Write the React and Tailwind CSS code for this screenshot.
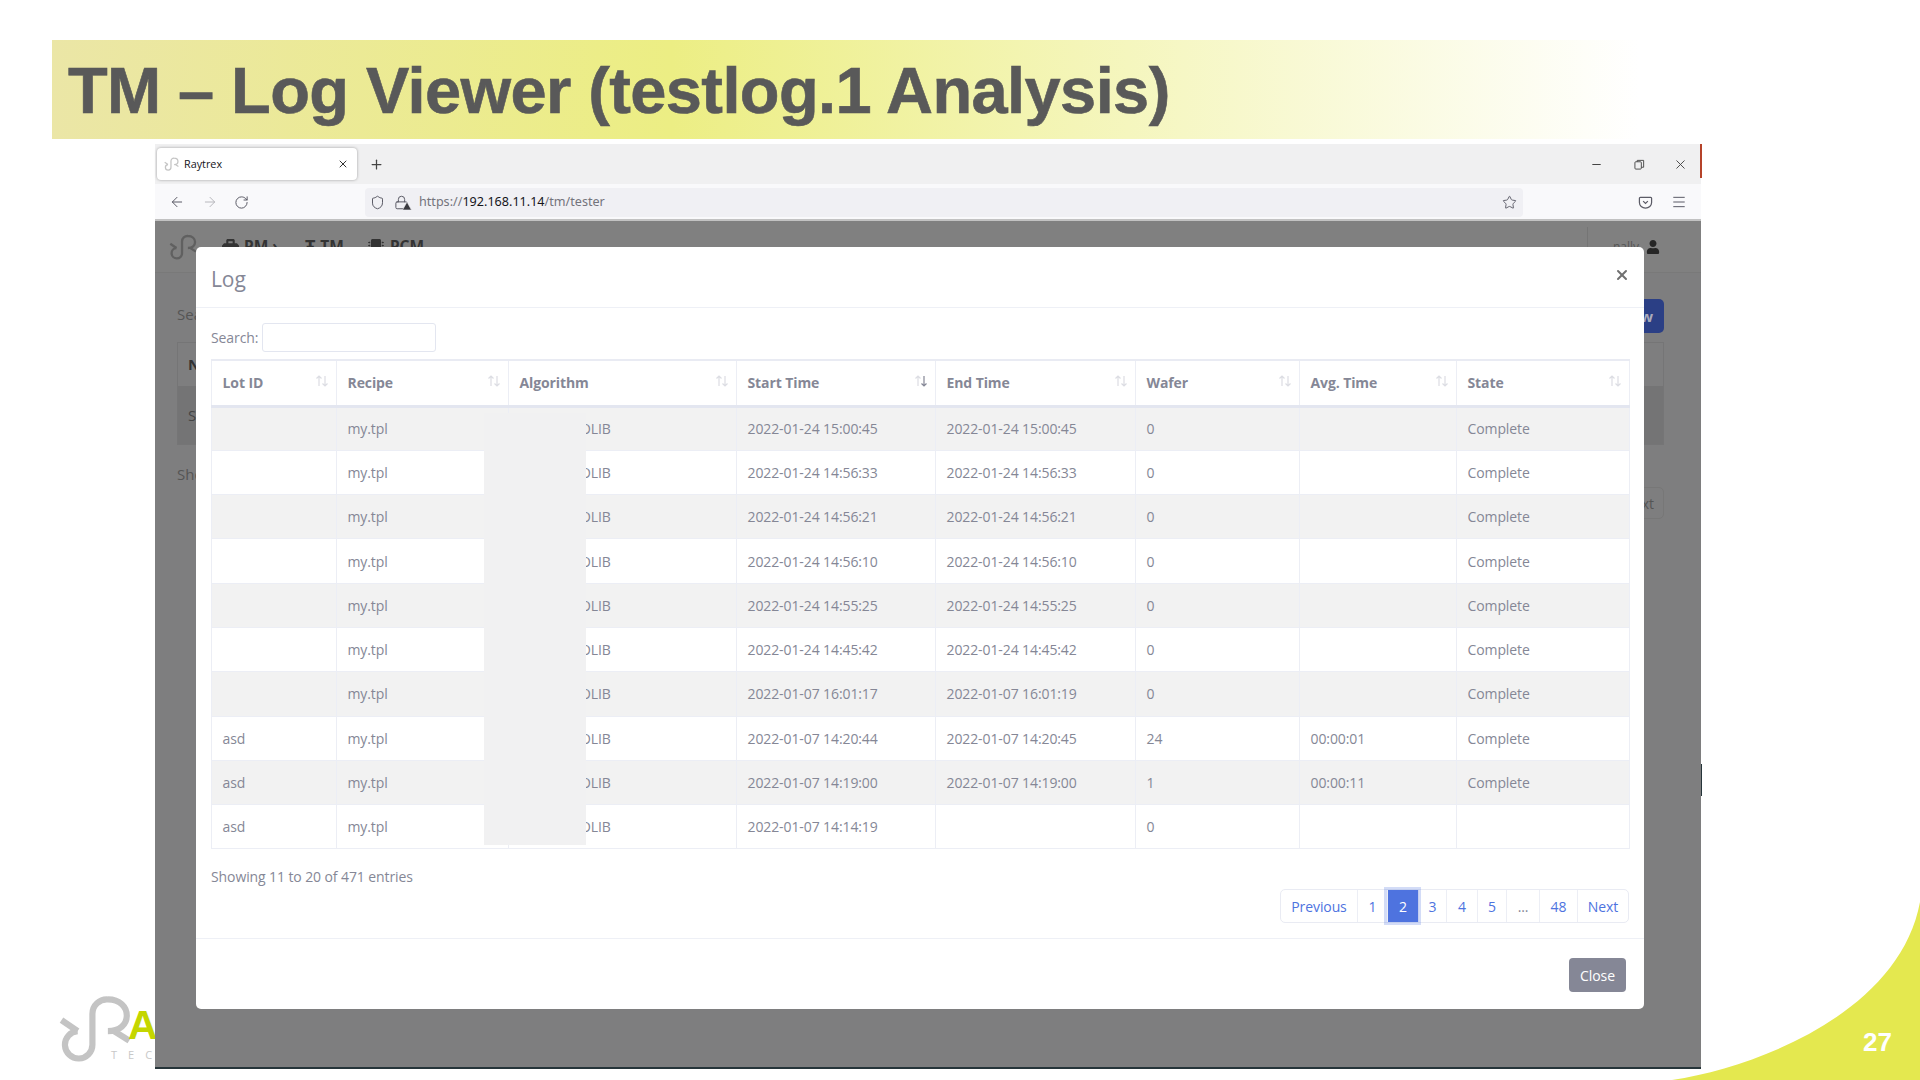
import React from 'react';
import { ArrowLeft, ArrowRight, RotateCw, Shield, Lock, Star, Minus, X, Plus, Menu } from 'lucide-react';
import { FaToolbox, FaMicrochip, FaUser } from 'react-icons/fa';

const rows = [
  ['', 'my.tpl', '2022-01-24 15:00:45', '2022-01-24 15:00:45', '0', '', 'Complete'],
  ['', 'my.tpl', '2022-01-24 14:56:33', '2022-01-24 14:56:33', '0', '', 'Complete'],
  ['', 'my.tpl', '2022-01-24 14:56:21', '2022-01-24 14:56:21', '0', '', 'Complete'],
  ['', 'my.tpl', '2022-01-24 14:56:10', '2022-01-24 14:56:10', '0', '', 'Complete'],
  ['', 'my.tpl', '2022-01-24 14:55:25', '2022-01-24 14:55:25', '0', '', 'Complete'],
  ['', 'my.tpl', '2022-01-24 14:45:42', '2022-01-24 14:45:42', '0', '', 'Complete'],
  ['', 'my.tpl', '2022-01-07 16:01:17', '2022-01-07 16:01:19', '0', '', 'Complete'],
  ['asd', 'my.tpl', '2022-01-07 14:20:44', '2022-01-07 14:20:45', '24', '00:00:01', 'Complete'],
  ['asd', 'my.tpl', '2022-01-07 14:19:00', '2022-01-07 14:19:00', '1', '00:00:11', 'Complete'],
  ['asd', 'my.tpl', '2022-01-07 14:14:19', '', '0', '', ''],
];

const columns = [
  { name: 'Lot ID', width: 'w-[125px]' },
  { name: 'Recipe', width: 'w-[172px]' },
  { name: 'Algorithm', width: 'w-[228px]' },
  { name: 'Start Time', width: 'w-[199px]', active: true },
  { name: 'End Time', width: 'w-[200px]' },
  { name: 'Wafer', width: 'w-[164px]' },
  { name: 'Avg. Time', width: 'w-[157px]' },
  { name: 'State', width: 'w-[173px]' },
];

const pages = [
  { label: 'Previous', width: 'w-[76px]' },
  { label: '1', width: 'w-[30px]' },
  { label: '2', width: 'w-[31px]', active: true },
  { label: '3', width: 'w-[28px]' },
  { label: '4', width: 'w-[31px]' },
  { label: '5', width: 'w-[29px]' },
  { label: '...', width: 'w-[33px]', muted: true },
  { label: '48', width: 'w-[38px]' },
  { label: 'Next', width: 'w-[51px]' },
];

const Logo = ({ className, color = '#c4c4c4' }) => (
  <svg viewBox="25 45 215 195" className={className} fill="none" stroke={color} strokeWidth="18">
    <path d="M35 118 L82 150" />
    <path d="M82 150 A40 40 0 1 0 125 190 L125 100 A42 42 0 0 1 170 58 C205 58 225 80 225 105 C225 130 205 150 170 150" />
    <path d="M188 150 L232 178" />
  </svg>
);

const SortArrows = ({ active }) => (
  <svg viewBox="0 0 14 14" className="w-[14px] h-[14px] shrink-0 mb-[3px]" fill="none" strokeWidth="1.2">
    <path d="M4 12 V2 M1.5 4.5 L4 2 L6.5 4.5" stroke="#dcdde3" />
    <path d="M10 2 V12 M7.5 9.5 L10 12 L12.5 9.5" stroke={active ? '#858796' : '#dcdde3'} />
  </svg>
);

const RestoreIcon = () => (
  <svg viewBox="0 0 12 12" className="w-[11px] h-[11px]" fill="none" stroke="#444" strokeWidth="1">
    <rect x="1" y="3" width="7" height="8" rx="1" />
    <path d="M3.5 3 V1.5 H10.5 V9 H8" />
  </svg>
);

const PocketIcon = () => (
  <svg viewBox="0 0 16 16" className="w-[15px] h-[15px]" fill="none" stroke="#5b5b66" strokeWidth="1.3">
    <path d="M2.5 2.5 H13.5 A1 1 0 0 1 14.5 3.5 V8 A6.5 6 0 0 1 1.5 8 V3.5 A1 1 0 0 1 2.5 2.5 Z" />
    <path d="M5.5 6.5 L8 9 L10.5 6.5" />
  </svg>
);

const LockWarning = () => (
  <span className="relative w-[16px] h-[16px] flex items-center">
    <Lock size={15} color="#5b5b66" strokeWidth={1.6} />
    <svg viewBox="0 0 10 10" className="absolute right-[-2px] bottom-[-1px] w-[10px] h-[10px]">
      <path d="M5 1 L9.5 9 H0.5 Z" fill="#3a3a3f" stroke="#f0f0f4" strokeWidth="0.6" />
    </svg>
  </span>
);

const App = () => {
  return (
    <div className="relative w-[1920px] h-[1080px] overflow-hidden bg-white font-['Open_Sans',sans-serif]">
      {/* slide decoration */}
      <svg viewBox="0 0 1920 1080" className="absolute inset-0 w-[1920px] h-[1080px]">
        <path d="M1672 1080 C1762 1066 1900 1010 1920 902 L1920 1080 Z" fill="#e4e84f" />
      </svg>
      <Logo className="absolute left-[58px] top-[995px] w-[74px] h-[67px]" />
      <span className="absolute left-[128px] top-[1004px] text-[41px] leading-[42px] font-bold text-[#c4d600] font-['Liberation_Sans',sans-serif]">
        A
      </span>
      <span className="absolute left-[111px] top-[1048px] text-[11px] leading-[14px] tracking-[11px] text-[#c8c8c8]">
        TEC
      </span>
      <span className="absolute left-[1863px] top-[1026px] text-[26px] leading-[32px] font-bold text-white font-['Liberation_Sans',sans-serif]">
        27
      </span>

      <div className="relative flex flex-col pt-[40px]">
        <div className="ml-[52px] w-[1588px] h-[99px] flex items-center pl-[16px] bg-[linear-gradient(90deg,#ebe6a6_0%,#ecee84_39%,#ffffff_100%)]">
          <h1 className="mt-[3px] text-[65px] leading-[96px] tracking-[-0.6px] font-bold text-[#595959] [-webkit-text-stroke:0.6px_#595959] font-['Liberation_Sans',sans-serif]">
            TM – Log Viewer (testlog.1 Analysis)
          </h1>
        </div>

        {/* browser window */}
        <div className="relative ml-[155px] mt-[5px] w-[1546px] h-[925px] flex flex-col">
          <div className="h-[40px] bg-[#f0f0f1] flex items-center pl-[2px] relative">
            <div className="w-[200px] h-[32px] bg-white rounded-[4px] shadow-[0_0_3px_rgba(0,0,0,0.35)] flex items-center pl-[7px] pr-[8px]">
              <Logo className="w-[15px] h-[14px]" />
              <span className="ml-[5px] text-[10.8px] text-[#15141a]">Raytrex</span>
              <X size={12} color="#333" className="ml-auto" />
            </div>
            <Plus size={15} color="#444" className="ml-[12px]" />
            <div className="ml-auto flex items-center">
              <Minus size={13} color="#444" />
              <span className="ml-[31px]"><RestoreIcon /></span>
              <X size={15} color="#444" strokeWidth={1.5} className="ml-[28px] mr-[13px]" />
            </div>
            <div className="absolute right-[-1px] top-0 h-[34px] w-[2px] bg-[#b5432a]" />
          </div>

          <div className="h-[37px] pt-[1px] bg-[#f9f9fb] border-b-2 border-[#c2c2c2] flex items-center pl-[14px]">
            <ArrowLeft size={16} color="#5b5b66" strokeWidth={1.5} />
            <ArrowRight size={16} color="#b8b8bd" strokeWidth={1.5} className="ml-[17px]" />
            <RotateCw size={15} color="#5b5b66" strokeWidth={1.6} className="ml-[16px]" />
            <div className="ml-[116px] w-[1158px] h-[29px] bg-[#f0f0f4] rounded-[4px] flex items-center pl-[5px] pr-[6px]">
              <Shield size={15} color="#5b5b66" strokeWidth={1.6} />
              <span className="ml-[9px]"><LockWarning /></span>
              <span className="ml-[9px] mt-[1px] text-[12.6px] text-[#74747c] font-['Noto_Sans',sans-serif]">
                https://<span className="text-[#15141a]">192.168.11.14</span>/tm/tester
              </span>
              <Star size={15} color="#5b5b66" strokeWidth={1.5} className="ml-auto" />
            </div>
            <span className="ml-[115px]"><PocketIcon /></span>
            <Menu size={16} color="#5b5b66" strokeWidth={1.5} className="ml-[18px]" />
          </div>

          {/* dimmed page behind the modal */}
          <div className="relative flex-1 bg-[#7e7e7f] border-b-2 border-[#26353a] overflow-hidden">
            <div className="h-[52px] bg-[#808080] flex items-center pl-[14px] pr-[41px] border-b border-[#797979]">
              <Logo className="w-[28px] h-[26px]" color="#606060" />
              <div className="ml-[25px] flex items-center text-[15.5px] font-bold text-[#333] font-['Noto_Sans',sans-serif]">
                <FaToolbox size={17} />
                <span className="ml-[5px]">PM ›</span>
                <span className="ml-[27px] text-[18px]">Ŧ</span>
                <span className="ml-[5px]">TM</span>
                <FaMicrochip size={16} className="ml-[24px]" />
                <span className="ml-[6px]">PCM</span>
              </div>
              <div className="ml-auto h-[40px] border-l border-[#757575] flex items-center pl-[25px]">
                <span className="text-[12px] text-[#555]">nally</span>
                <FaUser size={14} color="#262626" className="ml-[7px]" />
              </div>
            </div>
            <div className="flex flex-col pl-[22px] pr-[37px]">
              <div className="flex items-center justify-between mt-[26px]">
                <span className="text-[15px] text-[#555] mb-[3px]">Search</span>
                <div className="w-[90px] h-[34px] rounded-[5px] bg-[#2b3f85] flex items-center justify-end pr-[11px] text-[15px] font-bold text-[#aab]">
                  View
                </div>
              </div>
              <div className="mt-[9px] h-[103px] border border-[#757576] flex flex-col">
                <div className="h-[43px] flex items-center pl-[10px] text-[15px] font-bold text-[#333]">Name</div>
                <div className="flex-1 bg-[#747475] flex items-center pl-[10px] text-[15px] text-[#444]">Sample</div>
              </div>
              <div className="mt-[17px] flex items-start justify-between">
                <span className="text-[15px] text-[#555] mt-[1px]">Showing</span>
                <div className="w-[80px] h-[32px] mt-[25px] rounded-[5px] border border-[#777] flex items-center justify-end pr-[9px] text-[14px] text-[#555]">
                  Next
                </div>
              </div>
            </div>

            {/* modal */}
            <div className="absolute left-[41px] top-[26px] w-[1448px] h-[762px] bg-white rounded-[5px] flex flex-col text-[#858796] text-[14px] tracking-[-0.1px]">
              <div className="h-[61px] border-b border-[#eef0f6] flex items-center justify-between pl-[15px] pr-[15px]">
                <h5 className="text-[21px] leading-[30px] mt-[4px]">Log</h5>
                <X size={16} color="#707070" strokeWidth={3} className="mb-[4px] mr-[-1px]" />
              </div>

              <div className="h-[631px] border-b border-[#eef0f6] flex flex-col pl-[15px] pr-[15px]">
                <div className="h-[51px] pt-[7px] flex items-center">
                  <span>Search:</span>
                  <input className="ml-[4px] w-[174px] h-[29px] border border-[#e3e6f0] rounded-[3px] bg-white" />
                </div>
                <div className="relative">
                  <table className="table-fixed w-[1418px] border-collapse border-t-2 border-[#e9ebf3]">
                    <thead>
                      <tr className="h-[46px] border-b-[3px] border-[#e3e6f0]">
                        {columns.map((col) => (
                          <th key={col.name} className={`${col.width} p-0 border-x border-[#eceef5] font-bold text-left`}>
                            <div className="flex items-center justify-between pl-[10.5px] pr-[7px]">
                              <span>{col.name}</span>
                              <SortArrows active={col.active} />
                            </div>
                          </th>
                        ))}
                      </tr>
                    </thead>
                    <tbody>
                      {rows.map((row, i) => (
                        <tr key={i} className={`h-[44.3px] border-b border-[#eceef5] ${i % 2 === 0 ? 'bg-[#f2f2f2]' : 'bg-white'}`}>
                          <td className="p-0 pl-[10.5px] border-x border-[#eceef5]">{row[0]}</td>
                          <td className="p-0 pl-[10.5px] border-x border-[#eceef5]">{row[1]}</td>
                          <td className="p-0 pl-[71px] border-x border-[#eceef5]">OLIB</td>
                          {row.slice(2).map((cell, j) => (
                            <td key={j} className="p-0 pl-[10.5px] border-x border-[#eceef5]">{cell}</td>
                          ))}
                        </tr>
                      ))}
                    </tbody>
                  </table>
                  {/* redaction block pasted on the slide */}
                  <div className="absolute left-[273px] top-[54px] w-[102px] h-[432px] bg-[#f1f1f2]" />
                </div>
                <div className="mt-[18px] leading-[20px]">Showing 11 to 20 of 471 entries</div>
                <div className="mt-[2px] flex justify-end">
                  <div className="flex h-[34px] border border-[#e9ebf3] rounded-[5px]">
                    {pages.map((p, i) => (
                      <div
                        key={p.label}
                        className={`${p.width} flex items-center justify-center ${i > 0 ? 'border-l border-[#eceef5]' : ''} ${
                          p.active
                            ? 'bg-[#4e73df] text-white shadow-[0_0_0_3px_rgba(78,115,223,0.25)] relative'
                            : p.muted
                              ? 'text-[#858796]'
                              : 'text-[#4e73df]'
                        }`}
                      >
                        {p.label}
                      </div>
                    ))}
                  </div>
                </div>
              </div>

              <div className="flex-1 flex items-center justify-end pr-[18px]">
                <button className="w-[57px] h-[34px] mt-[2px] bg-[#858796] text-white rounded-[4px]">Close</button>
              </div>
            </div>
          </div>
          <div className="absolute right-[-1px] top-[620px] w-[1px] h-[32px] bg-[#26353a]" />
        </div>
      </div>
    </div>
  );
};

export default App;
